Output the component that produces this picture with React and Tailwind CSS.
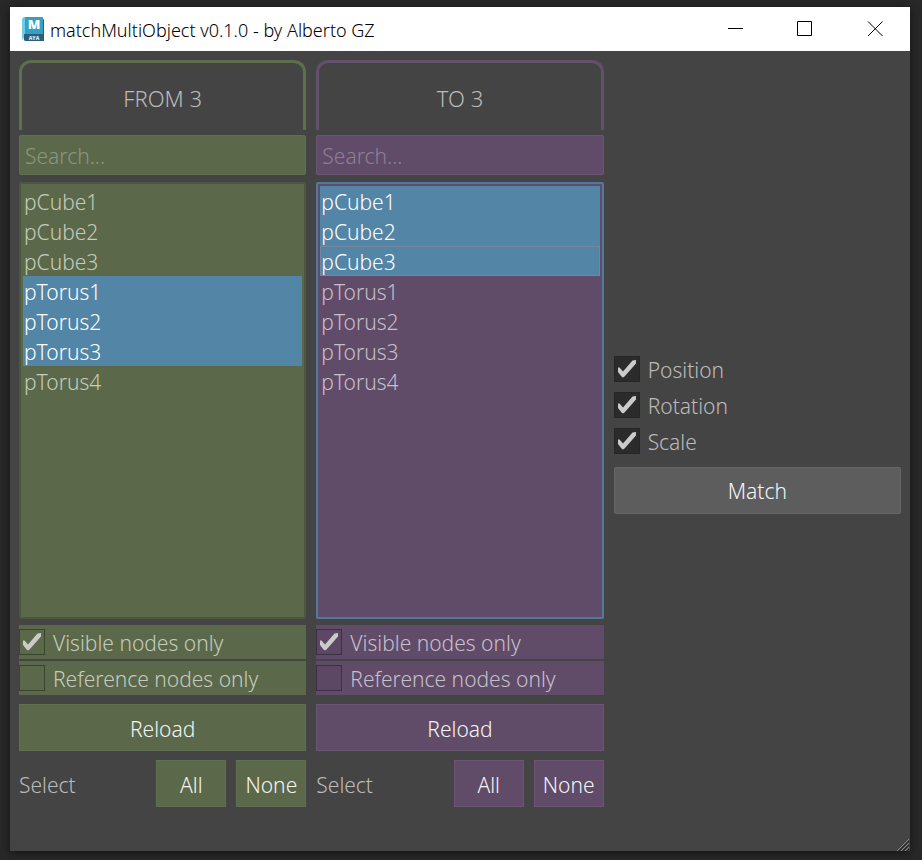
import { useState } from "react";
import clsx from "clsx";

const NODES = ["pCube1", "pCube2", "pCube3", "pTorus1", "pTorus2", "pTorus3", "pTorus4"];

const THEMES = {
  green: {
    border: "border-[#5f6e4d]",
    fill: "bg-[#5b694a]",
    edge: "border-[#5f7050]",
    listEdge: "border-[#4c573f]",
    placeholder: "placeholder:text-[#8b957f]",
    text: "text-[#c5cbbe]",
    box: "border-[#3a452e] bg-[#5b694a]",
  },
  purple: {
    border: "border-[#63506b]",
    fill: "bg-[#604c68]",
    edge: "border-[#6a5672]",
    listEdge: "border-[#4f7a9b]",
    placeholder: "placeholder:text-[#8d7f93]",
    text: "text-[#c7bfcb]",
    box: "border-[#3e2f45] bg-[#5c4864]",
  },
};

function MayaIcon() {
  return (
    <svg width="24" height="26" viewBox="0 0 24 26" aria-hidden="true">
      <path d="M0 3 2 1h19v17H0z" fill="#58b7d3" />
      <path d="M3 1h17l1 3v14H3z" fill="#36a0c4" />
      <path d="M0 3 3 1v17l-2 6-1-1z" fill="#72cbe0" />
      <path d="M2 18h20v7H3l-1-1z" fill="#2a6078" />
      <path d="M20 1l2 3v21h-1V3z" fill="#24637f" />
      <text x="12" y="13" textAnchor="middle" fontFamily="Open Sans" fontSize="13" fontWeight="800" fill="#fff">
        M
      </text>
      <text x="12" y="24" textAnchor="middle" fontFamily="Open Sans" fontSize="5" fontWeight="800" fill="#dbe8ee">
        AYA
      </text>
    </svg>
  );
}

function CheckBox({ label, defaultChecked, boxClass, textClass, rowClass }) {
  return (
    <label className={clsx("flex h-[34px] items-center gap-2", rowClass)}>
      <span className="grid size-[26px] place-items-center">
        <input
          type="checkbox"
          defaultChecked={defaultChecked}
          className={clsx("peer col-start-1 row-start-1 size-[26px] appearance-none border", boxClass)}
        />
        <svg
          className="pointer-events-none invisible col-start-1 row-start-1 peer-checked:visible"
          width="26"
          height="26"
          viewBox="0 0 26 26"
          aria-hidden="true"
        >
          <path d="M4 11.500h1.500l3.500 4L18.500 4.500 22 4v3.500L10.500 20.500 9 21.500 7.500 20.500 4 16z" fill="#cbcbcb" />
        </svg>
      </span>
      <span className={clsx("pt-0.5", textClass)}>{label}</span>
    </label>
  );
}

function NodeColumn({ title, theme, initial, current }) {
  const t = THEMES[theme];
  const [selected, setSelected] = useState(initial);
  const [query, setQuery] = useState("");
  const toggle = (name) =>
    setSelected(selected.includes(name) ? selected.filter((n) => n !== name) : [...selected, name]);
  const button = clsx("h-[47px] border pt-0.5 text-[#f4f4f4]", t.fill, t.edge);

  return (
    <section className="flex min-w-0 flex-1 flex-col">
      <h2
        className={clsx(
          "flex h-[70px] items-center justify-center rounded-t-xl border-x-3 border-t-3 pt-0.5 text-[22px] text-[#bbbbbb]",
          t.border,
        )}
      >
        {title} {selected.length}
      </h2>
      <input
        type="text"
        aria-label={`Search ${title}`}
        placeholder="Search..."
        value={query}
        onChange={(e) => setQuery(e.target.value)}
        className={clsx(
          "mt-[5px] h-10 w-full rounded-xs border px-[5px] pt-0.5 text-[#dddddd] outline-none",
          t.fill,
          t.edge,
          t.placeholder,
        )}
      />
      <ul
        role="listbox"
        aria-multiselectable="true"
        aria-label={`${title} nodes`}
        className={clsx("mt-[7px] min-h-[240px] flex-1 rounded-xs border-2 p-0.5", t.fill, t.listEdge)}
      >
        {NODES.filter((n) => n.toLowerCase().includes(query.toLowerCase())).map((name) => (
          <li
            key={name}
            role="option"
            aria-selected={selected.includes(name)}
            onClick={() => toggle(name)}
            className={clsx(
              "flex h-[30px] items-center border pt-0.5",
              selected.includes(name) ? "bg-[#5285a6] text-white" : t.text,
              name === current ? "border-[#7388a0]" : "border-transparent",
            )}
          >
            {name}
          </li>
        ))}
      </ul>
      <div className="mt-1.5 flex flex-col gap-0.5">
        <CheckBox label="Visible nodes only" defaultChecked boxClass={t.box} textClass={t.text} rowClass={t.fill} />
        <CheckBox label="Reference nodes only" boxClass={t.box} textClass={t.text} rowClass={t.fill} />
      </div>
      <button type="button" className={clsx("mt-[9px] w-full", button)}>
        Reload
      </button>
      <div className="mt-[9px] flex items-center gap-2.5">
        <span className="flex-1 pt-0.5 text-[#bbbbbb]">Select</span>
        <button type="button" className={clsx("w-[70px]", button)} onClick={() => setSelected(NODES)}>
          All
        </button>
        <button type="button" className={clsx("w-[70px]", button)} onClick={() => setSelected([])}>
          None
        </button>
      </div>
    </section>
  );
}

export default function App() {
  const box = "border-[#262626] bg-[#2b2b2b]";
  return (
    <div className="flex min-h-screen bg-[#282828] pt-[7px] pr-3 pb-[9px] pl-2.5 font-['Noto_Sans','Open_Sans',sans-serif]">
      <main className="flex flex-1 flex-col bg-[#444444] shadow-[0_2px_10px_rgba(0,0,0,0.5)]">
        <header className="flex h-11 items-center bg-white pl-3 text-black">
          <MayaIcon />
          <h1 className="ml-1 flex-1 pt-0.5 text-[18px] font-[350]">matchMultiObject v0.1.0 - by Alberto GZ</h1>
          <button type="button" aria-label="Minimize" className="grid h-11 w-[70px] place-items-center">
            <svg width="16" height="16" stroke="#000" fill="none" aria-hidden="true">
              <path d="M1 7.500h15" />
            </svg>
          </button>
          <button type="button" aria-label="Maximize" className="grid h-11 w-[70px] place-items-center">
            <svg width="16" height="16" stroke="#000" fill="none" aria-hidden="true">
              <path d="M.5.5h14v14H.5z" />
            </svg>
          </button>
          <button type="button" aria-label="Close" className="grid h-11 w-[70px] place-items-center">
            <svg width="16" height="16" stroke="#000" fill="none" aria-hidden="true">
              <path d="M1 .5l14.500 14.500M15.500.5 1 15" />
            </svg>
          </button>
        </header>
        <div className="flex flex-1 gap-2.5 px-[9px] pt-[9px] pb-[30px] text-[21px] leading-[30px] font-[350]">
          <NodeColumn title="FROM" theme="green" initial={["pTorus1", "pTorus2", "pTorus3"]} />
          <NodeColumn title="TO" theme="purple" initial={["pCube1", "pCube2", "pCube3"]} current="pCube3" />
          <section className="flex min-w-0 flex-1 flex-col justify-center pb-0.5">
            <div className="flex flex-col gap-0.5">
              <CheckBox label="Position" defaultChecked boxClass={box} textClass="text-[#bbbbbb]" />
              <CheckBox label="Rotation" defaultChecked boxClass={box} textClass="text-[#bbbbbb]" />
              <CheckBox label="Scale" defaultChecked boxClass={box} textClass="text-[#bbbbbb]" />
            </div>
            <button
              type="button"
              className="mt-[9px] h-[47px] rounded-xs border border-[#666666] bg-[#5d5d5d] pt-0.5 text-[#f4f4f4]"
            >
              Match
            </button>
          </section>
        </div>
        <footer className="flex h-3.5 justify-end">
          <svg width="14" height="14" aria-hidden="true">
            <path d="M1 14 13 2M5 14l8-8M9 14l4-4" stroke="#858585" />
            <path d="M3 14 13 4M7 14l6-6M11 14l2-2" stroke="#222" />
          </svg>
        </footer>
      </main>
    </div>
  );
}
